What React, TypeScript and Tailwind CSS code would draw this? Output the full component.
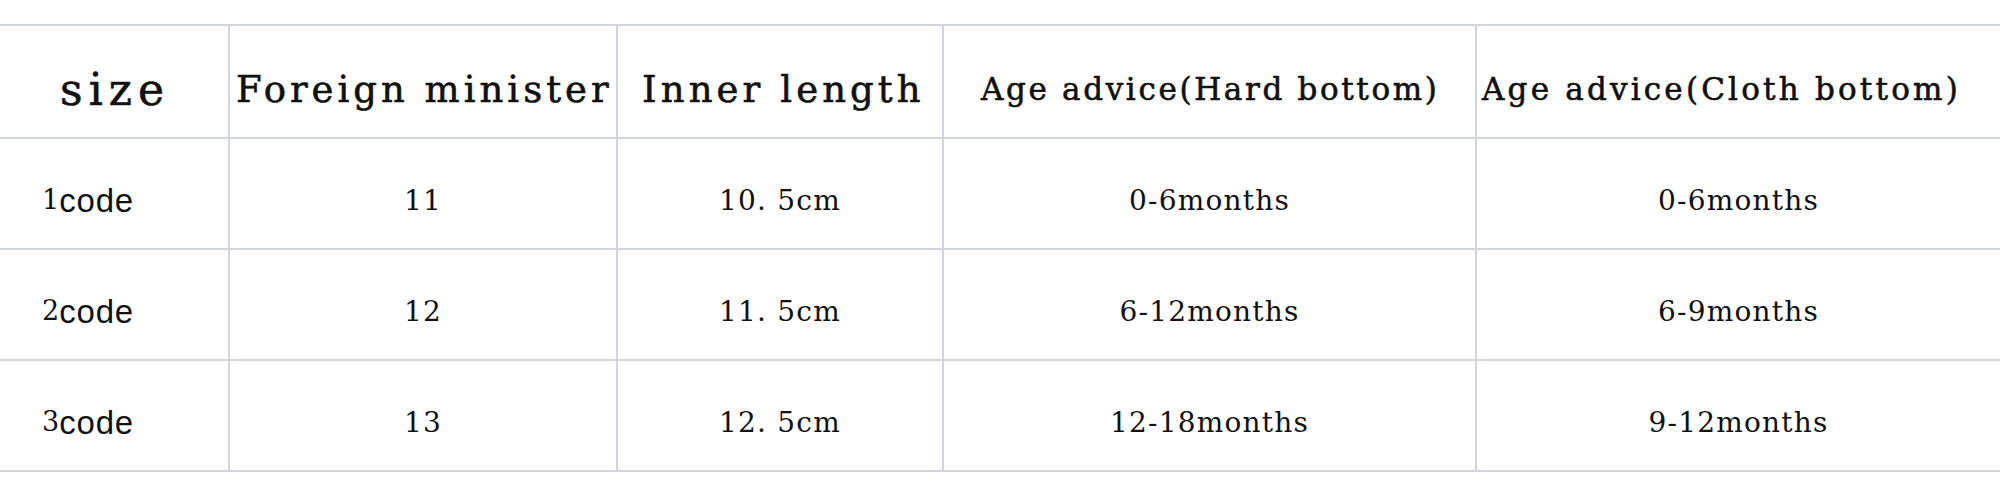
import React from 'react';

interface SizeRow {
  code: string;
  foreign: string;
  inner: string;
  hard: string;
  cloth: string;
}

const rows: SizeRow[] = [
  { code: '1', foreign: '11', inner: '10. 5cm', hard: '0-6months', cloth: '0-6months' },
  { code: '2', foreign: '12', inner: '11. 5cm', hard: '6-12months', cloth: '6-9months' },
  { code: '3', foreign: '13', inner: '12. 5cm', hard: '12-18months', cloth: '9-12months' },
];

const serif = "font-['DejaVu_Serif','Liberation_Serif',serif]";
const line = 'border-[#d0d5de]';
const heavy = '[-webkit-text-stroke:0.6px_#111]';

const App: React.FC = () => {
  return (
    <div className="w-[2000px] h-[497px] bg-white overflow-hidden">
      {/* Size chart */}
      <div className={`mt-[24px] border-t-2 ${line} grid grid-cols-[230px_388px_326px_533px_1fr] text-[#111] ${serif}`}>
        {/* Header */}
        <div className={`h-[113px] pt-4 pl-[2px] flex items-center justify-center border-r-2 border-b-2 ${line} text-[44px] tracking-[6px] ${heavy}`}>
          size
        </div>
        <div className={`h-[113px] pt-4 flex items-center pl-[6px] border-r-2 border-b-2 ${line} text-[37px] tracking-[4px] whitespace-nowrap ${heavy}`}>
          Foreign minister
        </div>
        <div className={`h-[113px] pt-4 flex items-center pl-[24px] border-r-2 border-b-2 ${line} text-[37px] tracking-[4.1px] whitespace-nowrap ${heavy}`}>
          Inner length
        </div>
        <div className={`h-[113px] pt-4 flex items-center pl-[37px] border-r-2 border-b-2 ${line} text-[31px] tracking-[2.65px] whitespace-nowrap ${heavy}`}>
          Age advice(Hard bottom)
        </div>
        <div className={`h-[113px] pt-4 flex items-center pl-[5px] border-b-2 ${line} text-[31px] tracking-[3.2px] whitespace-nowrap ${heavy}`}>
          Age advice(Cloth bottom)
        </div>

        {/* Rows */}
        {rows.map((row) => (
          <React.Fragment key={row.code}>
            <div className={`h-[111px] pt-[14px] flex items-center pl-[42px] border-r-2 border-b-2 ${line}`}>
              <span className="text-[27px]">{row.code}</span>
              <span className="text-[33px] font-['Liberation_Sans',sans-serif] tracking-[0.8px]">code</span>
            </div>
            <div className={`h-[111px] pt-[14px] flex items-center justify-center border-r-2 border-b-2 ${line} text-[28px] tracking-[1.2px]`}>
              {row.foreign}
            </div>
            <div className={`h-[111px] pt-[14px] flex items-center justify-center border-r-2 border-b-2 ${line} text-[28px] tracking-[1.2px]`}>
              {row.inner}
            </div>
            <div className={`h-[111px] pt-[14px] flex items-center justify-center border-r-2 border-b-2 ${line} text-[28px] tracking-[1.2px]`}>
              {row.hard}
            </div>
            <div className={`h-[111px] pt-[14px] flex items-center justify-center border-b-2 ${line} text-[28px] tracking-[1.2px]`}>
              {row.cloth}
            </div>
          </React.Fragment>
        ))}
      </div>
    </div>
  );
};

export default App;
